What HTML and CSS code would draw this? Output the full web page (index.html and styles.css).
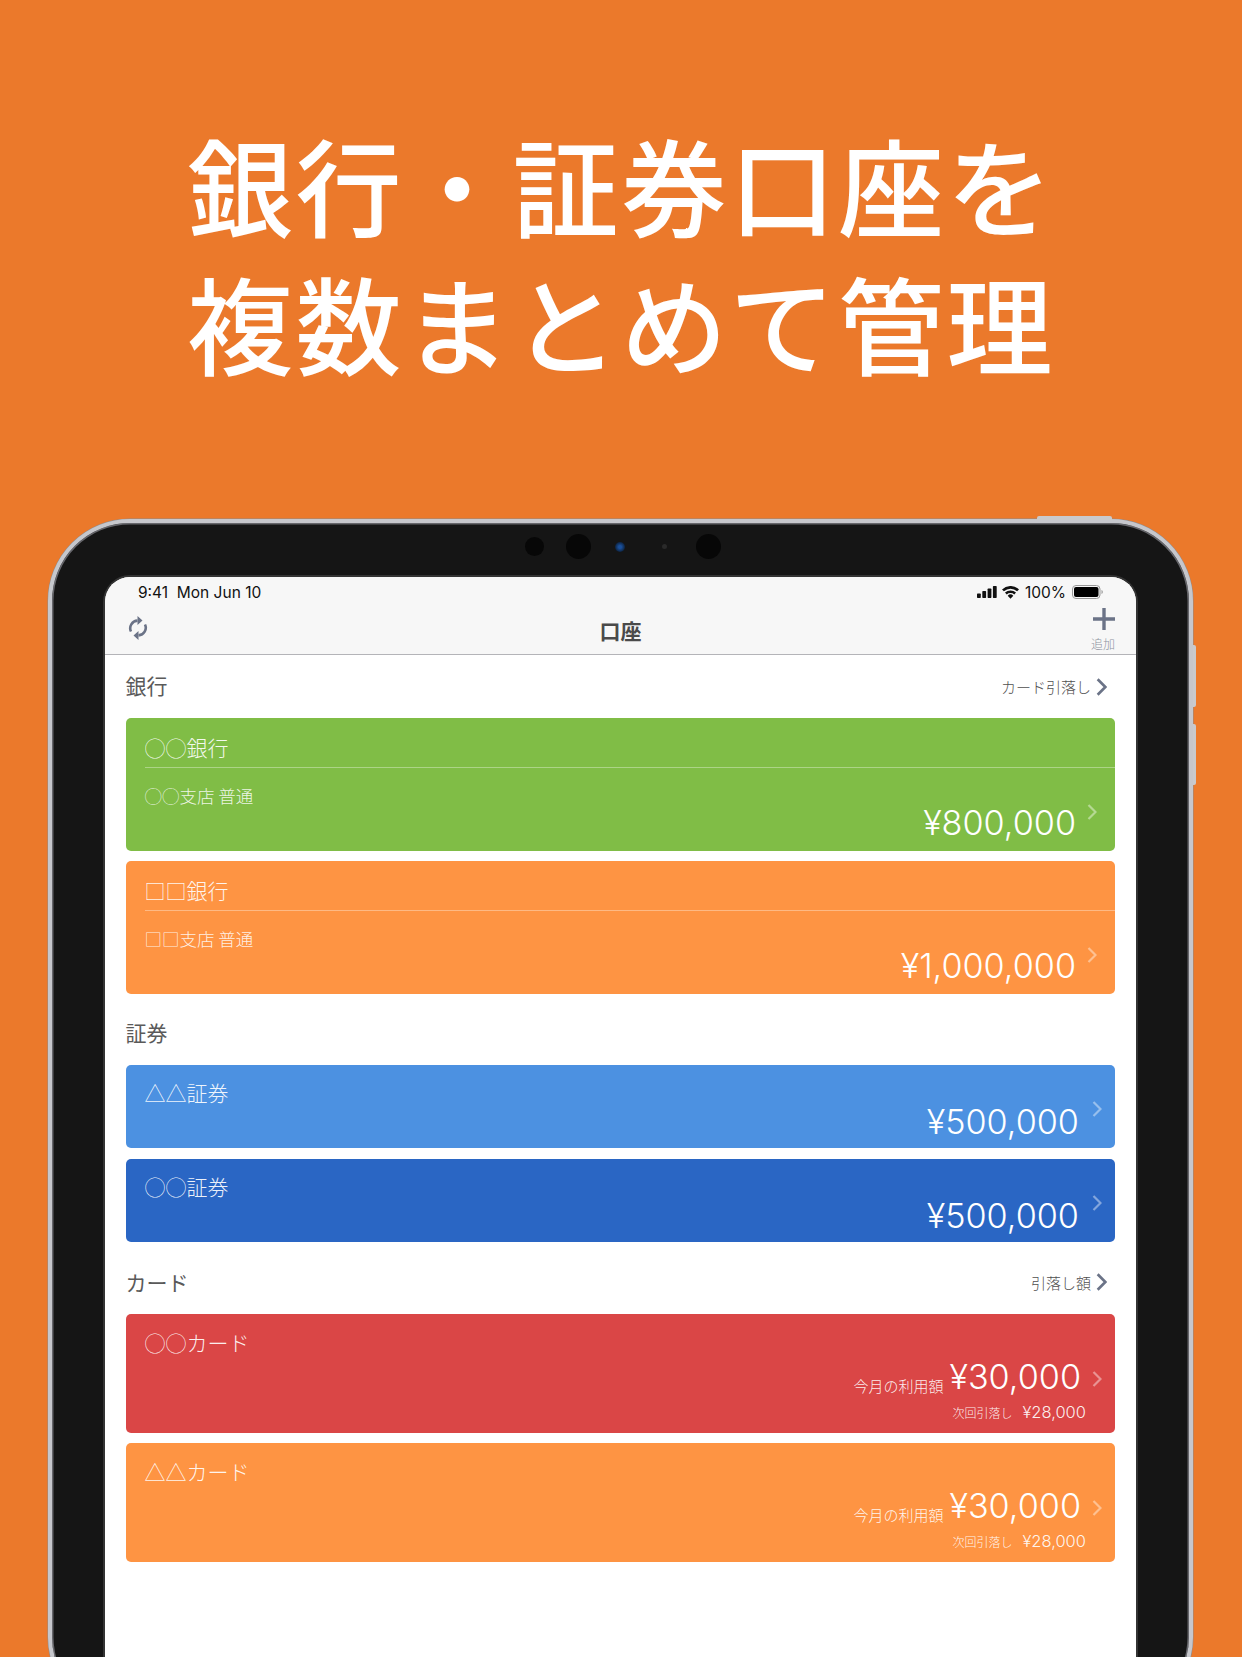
FILE: index.html
```html
<!DOCTYPE html>
<html lang="ja">
<head>
<meta charset="utf-8">
<title>口座</title>
<link rel="stylesheet" href="styles.css">
</head>
<body>
<header class="headline">
  <h1>銀行・証券口座を<br>複数まとめて管理</h1>
</header>
<div class="device">
  <span class="btn btn-top"></span>
  <span class="btn btn-vol1"></span>
  <span class="btn btn-vol2"></span>
  <div class="sensors">
    <span class="s s-a"></span><span class="s s-b"></span><span class="s s-lens"></span><span class="s s-dot"></span><span class="s s-b"></span>
  </div>
  <main class="screen">
    <div class="statusbar">
      <span class="time">9:41&nbsp;&nbsp;Mon Jun 10</span>
      <div class="status-right">
        <svg class="i-signal" viewBox="0 0 20 12"><rect x="0" y="7.5" width="3.8" height="4.5" rx=".7"/><rect x="5.3" y="5" width="3.8" height="7" rx=".7"/><rect x="10.6" y="2.5" width="3.800" height="9.500" rx=".7"/><rect x="15.900" y="0" width="3.800" height="12" rx=".7"/></svg>
        <svg class="i-wifi" viewBox="0 0 17 13"><path d="M8.500 12.800 5.700 9.700a4 4 0 0 1 5.600 0zM4.700 8.500 3 6.600a8 8 0 0 1 11 0l-1.700 1.900a5.600 5.600 0 0 0-7.600 0zM1.900 5.300 0 3.400a12.300 12.300 0 0 1 17 0l-1.900 1.900a9.800 9.800 0 0 0-13.200 0z"/></svg>
        <span class="batt-pct">100%</span>
        <svg class="i-batt" viewBox="0 0 31 14"><rect x=".5" y=".5" width="27.500" height="13" rx="3.500" fill="none" stroke="#999" /><rect x="2" y="2" width="24.500" height="10" rx="2"/><path d="M29.500 5v4c.8-.3 1.300-1.100 1.300-2s-.5-1.700-1.300-2z" fill="#999"/></svg>
      </div>
    </div>
    <nav class="navbar">
      <div class="nav-left">
        <svg class="i-sync" viewBox="0 0 20 24"><path d="M3 15.500A7.600 7.600 0 0 1 9.500 4.600M17 8.500A7.600 7.600 0 0 1 10.500 19.400" fill="none" stroke-width="2.600"/><path d="M9.500 0 14.500 4.500 9.500 9zM10.500 24 5.500 19.500 10.500 15z" stroke="none"/></svg>
      </div>
      <div class="nav-title">口座</div>
      <div class="nav-right">
        <svg class="i-plus" viewBox="0 0 22 22"><path d="M11 0v22M0 11h22"/></svg>
        <span class="nav-add">追加</span>
      </div>
    </nav>
    <div class="content">
      <section class="section">
        <div class="sec-head">
          <h2>銀行</h2>
          <a class="sec-link">カード引落し<svg class="i-chev" viewBox="0 0 10 16"><path d="M1.500 1 8.500 8 1.500 15"/></svg></a>
        </div>
        <div class="cards cards-bank">
          <article class="card bank green">
            <div class="card-name">◯◯銀行</div>
            <div class="card-body">
              <div class="card-main">
                <div class="branch">◯◯支店 普通</div>
                <div class="amount">¥800,000</div>
              </div>
              <svg class="card-chev" viewBox="0 0 10 16"><path d="M1.500 1 8.500 8 1.500 15"/></svg>
            </div>
          </article>
          <article class="card bank orange">
            <div class="card-name">□□銀行</div>
            <div class="card-body">
              <div class="card-main">
                <div class="branch">□□支店 普通</div>
                <div class="amount">¥1,000,000</div>
              </div>
              <svg class="card-chev" viewBox="0 0 10 16"><path d="M1.500 1 8.500 8 1.500 15"/></svg>
            </div>
          </article>
        </div>
      </section>
      <section class="section">
        <div class="sec-head"><h2>証券</h2></div>
        <div class="cards cards-stock">
          <article class="card stock sky">
            <div class="card-main">
              <div class="card-title">△△証券</div>
              <div class="amount">¥500,000</div>
            </div>
            <svg class="card-chev" viewBox="0 0 10 16"><path d="M1.500 1 8.500 8 1.500 15"/></svg>
          </article>
          <article class="card stock navy">
            <div class="card-main">
              <div class="card-title">◯◯証券</div>
              <div class="amount">¥500,000</div>
            </div>
            <svg class="card-chev" viewBox="0 0 10 16"><path d="M1.500 1 8.500 8 1.500 15"/></svg>
          </article>
        </div>
      </section>
      <section class="section">
        <div class="sec-head tall">
          <h2>カード</h2>
          <a class="sec-link">引落し額<svg class="i-chev" viewBox="0 0 10 16"><path d="M1.500 1 8.500 8 1.500 15"/></svg></a>
        </div>
        <div class="cards">
          <article class="card credit red">
            <div class="card-main">
              <div class="card-title">◯◯カード</div>
              <div class="usage"><span class="usage-label">今月の利用額</span><span class="amount">¥30,000</span></div>
              <div class="next"><span class="next-label">次回引落し</span><span class="next-val">¥28,000</span></div>
            </div>
            <svg class="card-chev" viewBox="0 0 10 16"><path d="M1.500 1 8.500 8 1.500 15"/></svg>
          </article>
          <article class="card credit orange">
            <div class="card-main">
              <div class="card-title">△△カード</div>
              <div class="usage"><span class="usage-label">今月の利用額</span><span class="amount">¥30,000</span></div>
              <div class="next"><span class="next-label">次回引落し</span><span class="next-val">¥28,000</span></div>
            </div>
            <svg class="card-chev" viewBox="0 0 10 16"><path d="M1.500 1 8.500 8 1.500 15"/></svg>
          </article>
        </div>
      </section>
    </div>
  </main>
</div>
</body>
</html>
```
FILE: styles.css
```css
* { box-sizing: border-box; }
html, body { margin: 0; padding: 0; }
body {
  width: 1242px;
  height: 1657px;
  overflow: hidden;
  background: #eb792b;
  font-family: "Noto Sans CJK JP", "Noto Sans", sans-serif;
  color: #fff;
}
.headline { height: 519px; padding-top: 114px; }
.headline h1 {
  margin: 0;
  font-size: 106px;
  line-height: 138px;
  letter-spacing: 2.500px;
  font-weight: 500;
  text-align: center;
  color: #fff;
}
.device {
  position: relative;
  width: 1145px;
  height: 1200px;
  margin-left: 48px;
  padding: 54px 53px 0 53px;
  background: #151515;
  border: 4px solid #c6c7cc;
  border-radius: 82px;
  box-shadow: inset 0 0 0 1.500px #66666b, 0 0 0 .5px #8d8d90;
}
.btn { position: absolute; background: #c9cacd; }
.btn-top { left: 985px; top: -7px; width: 75px; height: 4px; border-radius: 2px 2px 0 0; }
.btn-vol1 { left: 1141px; top: 122px; width: 3px; height: 62px; border-radius: 0 2px 2px 0; }
.btn-vol2 { left: 1141px; top: 201px; width: 3px; height: 61px; border-radius: 0 2px 2px 0; }
.sensors {
  position: absolute;
  left: 472.500px;
  top: 11px;
  display: flex;
  align-items: center;
  height: 25px;
}
.s { display: block; border-radius: 50%; background: #070707; flex: none; }
.s-a { width: 19px; height: 19px; margin-right: 22px; }
.s-b { width: 25px; height: 25px; }
.s-lens {
  width: 10px; height: 10px; margin: 0 36.500px 0 24.500px;
  background: radial-gradient(circle, #1a4f9a 20%, #0d2340 70%);
}
.s-dot { width: 5px; height: 5px; margin-right: 29px; background: #2a2a2a; }
.screen {
  width: 1031px;
  height: 1100px;
  background: #fff;
  border-radius: 25px 25px 0 0;
  box-shadow: 0 0 0 2px #333;
  overflow: hidden;
  color: #4a4a4a;
}
.statusbar {
  height: 30px;
  background: #f7f7f7;
  display: flex;
  align-items: center;
  justify-content: space-between;
  padding: 0 33px 0 33px;
  color: #111;
  font-family: Inter, "Liberation Sans", sans-serif;
  font-size: 15.500px;
}
.status-right { display: flex; align-items: center; }
.i-signal { width: 20px; height: 12px; fill: #111; margin-right: 5px; }
.i-wifi { width: 17px; height: 13px; fill: #111; margin-right: 6px; }
.batt-pct { margin-right: 6px; }
.i-batt { width: 31px; height: 14px; fill: #000; }
.navbar {
  height: 48px;
  background: #f7f7f7;
  border-bottom: 1px solid #b4b4b8;
  display: grid;
  grid-template-columns: 1fr auto 1fr;
  align-items: start;
}
.nav-left { padding: 9px 0 0 23px; }
.i-sync { display: block; width: 20px; height: 24px; stroke: #6b7387; fill: #6b7387; }
.nav-title {
  font-size: 21px;
  line-height: 32px;
  margin-top: 7px;
  font-weight: 700;
  color: #4a4a4a;
}
.nav-right {
  display: flex;
  flex-direction: column;
  align-items: flex-end;
  padding: 1px 21px 0 0;
}
.i-plus { display: block; width: 22px; height: 22px; stroke: #6b7387; stroke-width: 3.400; fill: none; }
.nav-add { font-size: 12px; line-height: 16px; margin-top: 6px; color: #8d92a0; font-weight: 300; }
.content { padding: 2px 21px 0 20.500px; }
.section + .section { margin-top: 10px; }
.sec-head {
  height: 61px;
  display: flex;
  align-items: center;
  justify-content: space-between;
}
.sec-head.tall { height: 62px; }
.sec-head h2 { margin: 0 0 5px; font-size: 21px; font-weight: 400; color: #5a5a5a; }
.sec-head.tall h2 { margin-bottom: 2px; }
.sec-link { display: flex; align-items: center; font-size: 15px; font-weight: 300; color: #4f4f4f; padding-right: 8px; margin-bottom: 2px; }
.i-chev { width: 11px; height: 18px; margin-left: 5px; stroke: #6b7387; stroke-width: 2.400; fill: none; }
.cards { display: flex; flex-direction: column; gap: 10.500px; }
.cards-bank { gap: 10px; }
.cards-stock { gap: 11px; }
.card { border-radius: 5px; color: rgba(255,255,255,.92); }
.green { background: #80bd46; }
.orange { background: #fe9443; }
.sky { background: #4c91e1; }
.navy { background: #2a66c4; }
.red { background: #da4646; }
.bank { height: 133px; }
.stock { height: 83px; display: flex; align-items: center; padding: 0 13px 0 19px; }
.credit { height: 118.500px; display: flex; align-items: center; padding: 0 13px 0 19px; }
.card-name {
  height: 50px;
  margin-left: 19px;
  border-bottom: 1px solid rgba(255,255,255,.35);
  font-size: 21px;
  line-height: 58px;
  font-weight: 300;
  overflow: hidden;
}
.card-body { height: 83px; display: flex; align-items: center; padding: 0 18px 0 19px; }
.card-main { flex: 1; min-width: 0; align-self: stretch; }
.bank .card-main { padding-top: 16px; }
.stock .card-main { padding-top: 14px; }
.credit .card-main { padding-top: 15px; }
.branch { font-size: 17.500px; line-height: 24px; font-weight: 300; opacity: .95; }
.card-title { font-size: 21px; line-height: 26px; font-weight: 300; }
.amount {
  font-family: Inter, "Noto Sans CJK JP", sans-serif;
  font-size: 34.200px;
  line-height: 44px;
  font-weight: 350;
  color: #fff;
  text-align: right;
}
.card-chev { width: 10px; height: 16px; margin-left: 11px; flex: none; stroke: rgba(255,255,255,.42); stroke-width: 2.200; fill: none; }
.bank .card-chev { margin-top: 4px; }
.stock .card-chev { margin: 5px 0 0 13px; }
.credit .card-chev { margin-top: 12px; }
.bank .amount { margin-top: -7px; }
.stock .amount { margin-top: -5px; }
.usage { display: flex; justify-content: flex-end; align-items: flex-end; }
.usage-label { font-size: 15px; line-height: 26px; font-weight: 300; margin-right: 6px; }
.next { display: flex; justify-content: flex-end; align-items: baseline; margin: 2px -5px 0 0; }
.next-label { font-size: 12px; font-weight: 300; margin-right: 10px; }
.next-val { font-family: Inter, "Noto Sans CJK JP", sans-serif; font-size: 16.500px; font-weight: 350; line-height: 22px; }
```
